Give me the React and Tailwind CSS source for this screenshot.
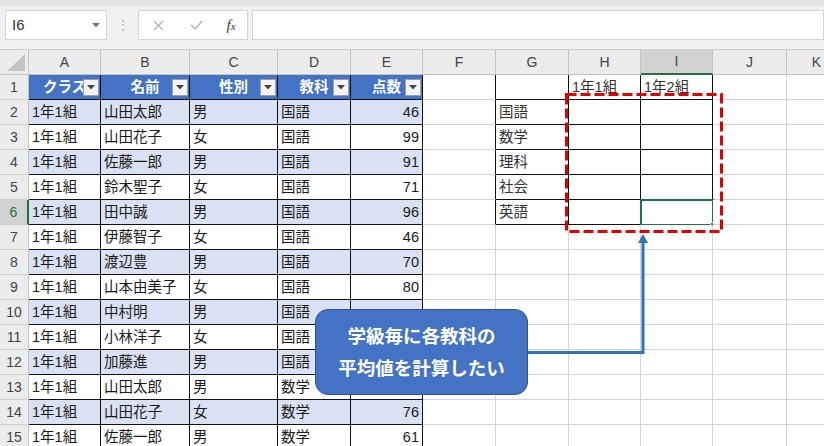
import React from "react";

const COLS = [
  { l: "A", w: "w-[72px]" },
  { l: "B", w: "w-[89px]" },
  { l: "C", w: "w-[88px]" },
  { l: "D", w: "w-[73px]" },
  { l: "E", w: "w-[72px]" },
  { l: "F", w: "w-[73px]" },
  { l: "G", w: "w-[73px]" },
  { l: "H", w: "w-[72px]" },
  { l: "I", w: "w-[72px]" },
  { l: "J", w: "w-[74px]" },
  { l: "K", w: "w-[60px]" },
];

const HEAD = ["クラス", "名前", "性別", "教科", "点数"];
const DATA = [
  ["1年1組", "山田太郎", "男", "国語", "46"],
  ["1年1組", "山田花子", "女", "国語", "99"],
  ["1年1組", "佐藤一郎", "男", "国語", "91"],
  ["1年1組", "鈴木聖子", "女", "国語", "71"],
  ["1年1組", "田中誠", "男", "国語", "96"],
  ["1年1組", "伊藤智子", "女", "国語", "46"],
  ["1年1組", "渡辺豊", "男", "国語", "70"],
  ["1年1組", "山本由美子", "女", "国語", "80"],
  ["1年1組", "中村明", "男", "国語", ""],
  ["1年1組", "小林洋子", "女", "国語", ""],
  ["1年1組", "加藤進", "男", "国語", ""],
  ["1年1組", "山田太郎", "男", "数学", ""],
  ["1年1組", "山田花子", "女", "数学", "76"],
  ["1年1組", "佐藤一郎", "男", "数学", "61"],
];
const SUBJ = ["国語", "数学", "理科", "社会", "英語"];

const inT = (r, c) =>
  (r >= 1 && r <= 15 && c >= 0 && c <= 4) || (r >= 1 && r <= 6 && c >= 6 && c <= 8);

function FilterBtn() {
  return (
    <div className="absolute right-[1px] top-[4px] w-[16px] h-[17px] bg-[#f4f4f4] border border-[#a0a0a0] flex items-center justify-center">
      <svg width="8" height="5" viewBox="0 0 8 5">
        <path d="M0 0 L8 0 L4 4.5 Z" fill="#444" />
      </svg>
    </div>
  );
}

function Cell({ r, c }) {
  const col = COLS[c];
  const blackR = inT(r, c) || inT(r, c + 1);
  const blackB = inT(r, c) || inT(r + 1, c);
  const br = blackR ? "border-r-[#111]" : "border-r-[#d4d4d4]";
  const bb = blackB ? "border-b-[#111]" : "border-b-[#d4d4d4]";
  let bg = "bg-white";
  let content = null;
  let align = "justify-start pl-[3px]";
  let extra = null;
  let txt = "text-[#1a1a1a]";

  if (r === 1 && c <= 4) {
    bg = "bg-[#4472c4]";
    align = "justify-center";
    txt = "text-white font-bold";
    content = HEAD[c];
    extra = <FilterBtn />;
  } else if (r >= 2 && c <= 4) {
    bg = r % 2 === 0 ? "bg-[#d9e1f2]" : "bg-white";
    content = DATA[r - 2][c];
    if (c === 4) align = "justify-end pr-[3px]";
  } else if (r === 1 && c === 7) {
    content = "1年1組";
    txt = "text-[#333]";
  } else if (r === 1 && c === 8) {
    content = "1年2組";
    txt = "text-[#333]";
  } else if (r >= 2 && r <= 6 && c === 6) {
    content = SUBJ[r - 2];
    txt = "text-[#333]";
  }

  if (r === 6 && c === 8) {
    extra = (
      <>
        <div className="absolute left-[-1px] top-[-1px] right-[-2px] bottom-[-2px] border-2 border-[#217346]" />
        <div className="absolute right-[-4px] bottom-[-4px] w-[6px] h-[6px] bg-[#217346] border border-white" />
      </>
    );
  }

  return (
    <div
      className={`relative shrink-0 h-[25px] flex items-center border-r border-b ${br} ${bb} ${bg} ${col.w} ${align} ${txt}`}
    >
      <span className="whitespace-nowrap leading-none">{content}</span>
      {extra}
    </div>
  );
}

function RowHeader({ r }) {
  const sel = r === 6;
  return (
    <div
      className={`shrink-0 w-[29px] h-[25px] flex items-center justify-center border-b border-b-[#cfcfcf] text-[14px] leading-none ${
        sel
          ? "bg-[#d2d2d2] text-[#217346] border-r-2 border-r-[#217346]"
          : "bg-[#ececec] text-[#444] border-r border-r-[#c4c4c4]"
      }`}
    >
      {r}
    </div>
  );
}

export default function App() {
  const rows = Array.from({ length: 15 }, (_, i) => i + 1);
  return (
    <div
      className="relative w-[824px] h-[446px] overflow-hidden bg-white text-[14.5px]"
      style={{ fontFamily: '"Liberation Sans", "Noto Sans CJK JP", sans-serif' }}
    >
      {/* formula bar */}
      <div className="h-[50px] bg-[#f0f0f0] border-b border-[#d0d0d0] flex flex-col">
        <div className="h-[6px] bg-[#e4e4e4]" />
        <div className="flex items-center pt-[4px] pl-[5px] gap-0 h-[34px]">
          <div className="w-[102px] h-[30px] bg-white border border-[#d4d4d4] flex items-center justify-between pl-[6px] pr-[6px]">
            <span className="text-[15px] text-[#333]">I6</span>
            <svg width="8" height="5" viewBox="0 0 8 5">
              <path d="M0 0 L8 0 L4 4.5 Z" fill="#777" />
            </svg>
          </div>
          <div className="w-[31px] flex justify-center text-[#bbb] text-[14px]">⋮</div>
          <div className="w-[110px] h-[30px] bg-white border border-[#d4d4d4] flex items-center">
            <div className="w-[38px] flex justify-center">
              <svg width="11" height="11" viewBox="0 0 11 11">
                <path d="M1 1 L10 10 M10 1 L1 10" stroke="#b4b4b4" strokeWidth="1.3" />
              </svg>
            </div>
            <div className="w-[38px] flex justify-center">
              <svg width="13" height="10" viewBox="0 0 13 10">
                <path d="M1 5 L5 9 L12 1" stroke="#b4b4b4" strokeWidth="1.4" fill="none" />
              </svg>
            </div>
            <div className="w-[32px] flex justify-center items-baseline text-[#333] italic" style={{ fontFamily: '"Liberation Serif", serif' }}>
              <span className="text-[15px]">f</span>
              <span className="text-[11px]">x</span>
            </div>
          </div>
          <div className="w-[4px]" />
          <div className="flex-1 h-[30px] bg-white border border-[#d4d4d4]" />
        </div>
      </div>

      {/* column headers */}
      <div className="flex h-[25px]">
        <div className="shrink-0 w-[29px] h-[25px] bg-[#ececec] border-r border-b border-[#c4c4c4] relative">
          <svg className="absolute right-[3px] bottom-[3px]" width="18" height="17" viewBox="0 0 18 17">
            <path d="M18 0 L18 17 L0 17 Z" fill="#c4c4c4" />
          </svg>
        </div>
        {COLS.map((c) => (
          <div
            key={c.l}
            className={`shrink-0 ${c.w} h-[25px] flex items-center justify-center text-[14px] border-r border-r-[#c4c4c4] ${
              c.l === "I"
                ? "bg-[#d2d2d2] border-b-2 border-b-[#217346] text-[#2b4f3a]"
                : "bg-[#ececec] border-b border-b-[#c4c4c4] text-[#444]"
            }`}
          >
            {c.l}
          </div>
        ))}
      </div>

      {/* rows */}
      {rows.map((r) => (
        <div key={r} className="flex h-[25px]">
          <RowHeader r={r} />
          {COLS.map((_, c) => (
            <Cell key={c} r={r} c={c} />
          ))}
        </div>
      ))}

      {/* overlays */}
      <svg className="absolute left-0 top-0 pointer-events-none" width="824" height="446">
        <rect x="566.5" y="94.5" width="155" height="137" fill="none" stroke="#e00000" strokeWidth="3" strokeDasharray="10 4" />
        <path d="M527 352.5 L643 352.5 L643 242" fill="none" stroke="#2e75b6" strokeWidth="3" />
        <path d="M643 234 L638 243 L648 243 Z" fill="#2e75b6" />
      </svg>

      <div className="absolute left-[315px] top-[309px] w-[213px] h-[86px] rounded-[13px] bg-[#4472c4] border border-[#2f528f] flex flex-col items-center justify-center gap-[8px] pb-[3px] text-white font-bold text-[18.5px] leading-[24px]"
        style={{ fontFamily: '"Noto Sans CJK JP", sans-serif' }}>
        <div>学級毎に各教科の</div>
        <div>平均値を計算したい</div>
      </div>
    </div>
  );
}
